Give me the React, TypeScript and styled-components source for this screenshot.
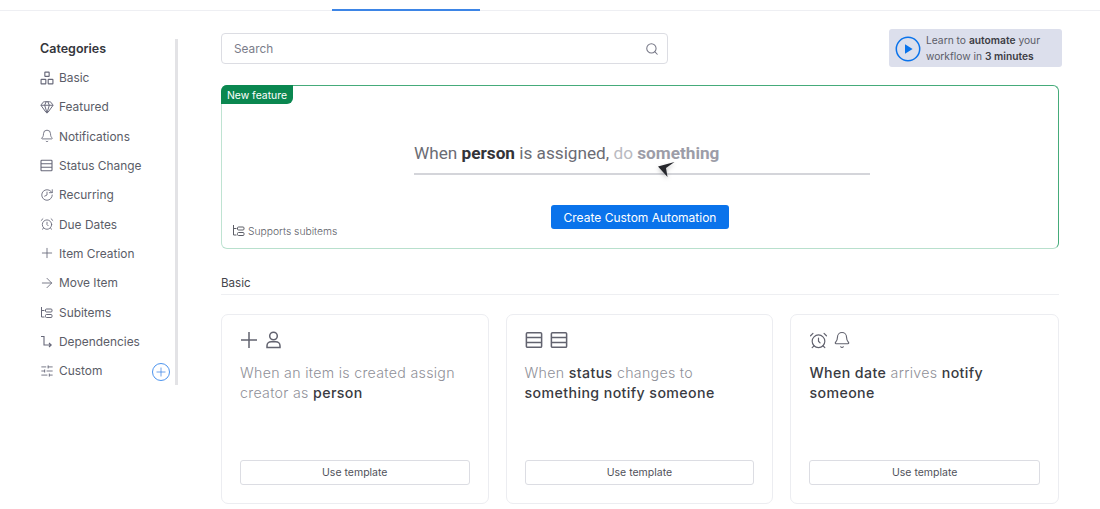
import type { ReactNode } from 'react';
import styled, { createGlobalStyle } from 'styled-components';
import {
  AlarmClock,
  ArrowRight,
  Bell,
  Gem,
  History,
  Plus,
  Search,
  SlidersHorizontal,
} from 'lucide-react';

const GlobalStyle = createGlobalStyle`
  html, body {
    margin: 0;
    padding: 0;
    background: #ffffff;
    font-family: Inter, "Open Sans", sans-serif;
    color: #323338;
  }
`;

const Page = styled.div`
  width: 1100px;
  height: 509px;
  overflow: hidden;
  display: flex;
  flex-direction: column;
`;

const TopBar = styled.div`
  height: 10px;
  flex: none;
  border-bottom: 1px solid #eeeff3;
  padding-left: 332px;
`;

const ActiveTab = styled.div`
  width: 148px;
  height: 2px;
  margin-top: 9px;
  background: #3d85e6;
`;

const Body = styled.div`
  display: flex;
  flex: 1;
  padding-left: 40px;
`;

const Sidebar = styled.aside`
  width: 138px;
  height: 346px;
  margin-top: 28px;
  flex: none;
  border-right: 3px solid #e3e3e6;
  padding-right: 5px;
  box-sizing: border-box;
`;

const SideTitle = styled.h3`
  margin: 0 0 3px;
  height: 20px;
  padding-top: 1px;
  font-size: 12.5px;
  line-height: 18px;
  font-weight: 600;
  color: #35363c;
`;

const SideRow = styled.div`
  height: 29.3px;
  display: flex;
  align-items: center;
  gap: 6px;
  font-size: 11.9px;
  color: #5b5d68;
  white-space: nowrap;
`;

const SideIcon = styled.span`
  width: 13px;
  height: 13px;
  flex: none;
  display: flex;
  align-items: center;
  justify-content: center;
  color: #676879;

  svg {
    flex: none;
  }
`;

const AddButton = styled.span`
  margin: 2px 0 0 auto;
  width: 18px;
  height: 18px;
  border: 1px solid #4d94ee;
  border-radius: 50%;
  box-sizing: border-box;
  display: flex;
  align-items: center;
  justify-content: center;

  svg {
    color: #3d85e6;
  }
`;

const Main = styled.main`
  width: 838px;
  margin-left: 43px;
  flex: none;
  padding-top: 18px;
`;

const TopRow = styled.div`
  display: flex;
  justify-content: space-between;
  align-items: center;
  height: 38px;
`;

const SearchBox = styled.div`
  width: 447px;
  height: 31px;
  box-sizing: border-box;
  border: 1px solid #dcdde3;
  border-radius: 4px;
  padding: 1px 8px 0 12px;
  display: flex;
  align-items: center;
  justify-content: space-between;
  font-size: 11.8px;
  color: #7b7d8a;

  svg {
    color: #767786;
  }
`;

const LearnBox = styled.div`
  width: 173px;
  height: 38px;
  margin-right: -3px;
  box-sizing: border-box;
  border-radius: 3px;
  background: #dcdfec;
  padding: 1px 5px 0 6px;
  display: flex;
  align-items: center;
  gap: 5px;
  font-size: 10.25px;
  line-height: 15.5px;
  color: #5b5d68;

  b {
    font-weight: 600;
    color: #3c3d44;
  }
`;

const FeatureCard = styled.section`
  position: relative;
  height: 164px;
  margin-top: 18px;
  box-sizing: border-box;
  border: 1px solid #45ab7a;
  border-left-color: #bfe3d2;
  border-bottom-color: #b8e0cd;
  border-radius: 6px;
  display: flex;
  flex-direction: column;
  align-items: center;
`;

const FeatureBadge = styled.span`
  position: absolute;
  top: -1px;
  left: -1px;
  height: 19px;
  padding: 0 6px;
  border-radius: 6px 0 6px 0;
  background: #0a8750;
  color: #ffffff;
  font-size: 10.4px;
  line-height: 21px;
`;

const SentenceBlock = styled.div`
  position: relative;
  width: 456px;
  height: 33px;
  margin: 54px 0 0 4px;
  border-bottom: 2px solid #d4d5da;
  font-family: Roboto, sans-serif;
  font-size: 17.2px;
  line-height: 27px;
  color: #6b6c74;

  b {
    font-weight: 700;
    color: #333338;
  }
`;

const Faded = styled.span`
  color: #b9bac1;

  b {
    color: #9c9da8;
  }
`;

const Pointer = styled.svg`
  position: absolute;
  left: 244px;
  top: 20px;
  filter: drop-shadow(0 2px 2px rgba(0, 0, 0, 0.25));
`;

const FeatureFooter = styled.div`
  width: 100%;
  margin-top: 30px;
  display: grid;
  grid-template-columns: 1fr auto 1fr;
`;

const Supports = styled.span`
  align-self: end;
  padding-left: 10px;
  margin-bottom: -8px;
  display: flex;
  align-items: center;
  gap: 3px;
  font-size: 10.3px;
  font-weight: 300;
  color: #5d5e67;
`;

const PrimaryButton = styled.button`
  width: 178px;
  height: 24px;
  padding: 0;
  border: none;
  border-radius: 3px;
  background: #0a73eb;
  color: #ffffff;
  font-family: inherit;
  font-size: 12px;
`;

const SectionTitle = styled.div`
  margin-top: 26px;
  height: 19px;
  border-bottom: 1px solid #eeeff2;
  font-size: 11.6px;
  line-height: 16px;
  color: #44454c;
`;

const CardGrid = styled.div`
  margin-top: 19px;
  display: grid;
  grid-template-columns: 267.5px 267.9px 268.6px;
  gap: 17px;
`;

const Card = styled.article`
  height: 190px;
  box-sizing: border-box;
  border: 1px solid #ecedf1;
  border-radius: 7px;
  padding: 14px 18px 18px;
  display: flex;
  flex-direction: column;
`;

const CardIcons = styled.div<{ $gap: number }>`
  height: 22px;
  display: flex;
  align-items: center;
  gap: ${(props) => props.$gap}px;
  color: #62636f;
`;

const CardText = styled.p`
  margin: 12px 0 0;
  flex: 1;
  font-size: 14.2px;
  line-height: 19.5px;
  font-weight: 300;
  letter-spacing: 0.3px;
  color: #8f9098;

  b {
    font-weight: 500;
    letter-spacing: 0.4px;
    color: #3a3b42;
  }
`;

const TemplateButton = styled.button`
  height: 25px;
  padding: 0;
  border: 1px solid #dcdde3;
  border-radius: 3px;
  background: #ffffff;
  color: #50515a;
  font-family: inherit;
  font-size: 10.5px;
`;

const BasicIcon = () => (
  <svg width="14" height="14" viewBox="0 0 13 13" fill="none" stroke="currentColor" strokeWidth="1.05">
    <rect x="4.5" y="1" width="4" height="4" rx="0.4" />
    <rect x="1" y="7.8" width="4.4" height="4.2" rx="0.4" />
    <rect x="7.6" y="7.8" width="4.4" height="4.2" rx="0.4" />
  </svg>
);

const RowsIcon = ({ size = 13 }: { size?: number }) => (
  <svg width={size} height={size} viewBox="0 0 13 13" fill="none" stroke="currentColor" strokeWidth="1.1">
    <rect x="1" y="1.2" width="11" height="10.6" rx="0.8" />
    <path d="M1 4.7h11M1 8.3h11" />
  </svg>
);

const SubitemsIcon = () => (
  <svg width="13" height="13" viewBox="0 0 13 13" fill="none" stroke="currentColor" strokeWidth="1">
    <path d="M1.5 1v10h3M1.5 4.5h3" />
    <rect x="5.5" y="3" width="6.5" height="3" rx="1" />
    <rect x="5.5" y="8.5" width="6.5" height="3" rx="1" />
  </svg>
);

const DependencyIcon = () => (
  <svg width="13" height="13" viewBox="0 0 13 13" fill="none" stroke="currentColor" strokeWidth="1.1">
    <path d="M1 1.5h3v8.5h7M9 8l2.2 2L9 12" />
  </svg>
);

const PlayIcon = () => (
  <svg width="26" height="26" viewBox="0 0 26 26" style={{ flex: 'none' }}>
    <circle cx="13" cy="13" r="11.7" fill="none" stroke="#0a73eb" strokeWidth="1.5" />
    <path d="M10 8.2v9.6l7.6-4.8z" fill="#0a73eb" />
  </svg>
);

const LargePlus = () => (
  <svg width="18" height="18" viewBox="0 0 18 18" fill="none" stroke="currentColor" strokeWidth="1.5">
    <path d="M1 9h16M9 1v16" />
  </svg>
);

const PersonIcon = () => (
  <svg width="15" height="18" viewBox="0 0 15 18" fill="none" stroke="currentColor" strokeWidth="1.5">
    <circle cx="7.5" cy="5" r="3.8" />
    <path d="M1 16.5v-1.7c0-2.4 2-4 4.2-4h4.6c2.2 0 4.2 1.6 4.2 4v1.7z" />
  </svg>
);

type Category = { label: string; icon: ReactNode };

const categories: Category[] = [
  { label: 'Basic', icon: <BasicIcon /> },
  { label: 'Featured', icon: <Gem size={14} strokeWidth={1.7} /> },
  { label: 'Notifications', icon: <Bell size={14} strokeWidth={1.5} /> },
  { label: 'Status Change', icon: <RowsIcon /> },
  { label: 'Recurring', icon: <History size={14} strokeWidth={1.5} style={{ transform: 'scaleX(-1)' }} /> },
  { label: 'Due Dates', icon: <AlarmClock size={14} strokeWidth={1.5} /> },
  { label: 'Item Creation', icon: <Plus size={16} strokeWidth={1.3} /> },
  { label: 'Move Item', icon: <ArrowRight size={16} strokeWidth={1.3} /> },
  { label: 'Subitems', icon: <SubitemsIcon /> },
  { label: 'Dependencies', icon: <DependencyIcon /> },
  { label: 'Custom', icon: <SlidersHorizontal size={14} strokeWidth={1.5} /> },
];

type Template = { iconGap: number; icons: ReactNode; text: ReactNode };

const templates: Template[] = [
  {
    iconGap: 8,
    icons: (
      <>
        <LargePlus />
        <PersonIcon />
      </>
    ),
    text: (
      <>
        When an item is created assign creator as <b>person</b>
      </>
    ),
  },
  {
    iconGap: 7,
    icons: (
      <>
        <RowsIcon size={18} />
        <RowsIcon size={18} />
      </>
    ),
    text: (
      <>
        When <b>status</b> changes to <b>something notify someone</b>
      </>
    ),
  },
  {
    iconGap: 5,
    icons: (
      <>
        <AlarmClock size={19} strokeWidth={1.5} />
        <Bell size={18} strokeWidth={1.5} />
      </>
    ),
    text: (
      <>
        <b>When date</b> arrives <b>notify someone</b>
      </>
    ),
  },
];

export default function App() {
  return (
    <Page>
      <GlobalStyle />
      <TopBar>
        <ActiveTab />
      </TopBar>
      <Body>
        <Sidebar>
          <SideTitle>Categories</SideTitle>
          {categories.map((category) => (
            <SideRow key={category.label}>
              <SideIcon>{category.icon}</SideIcon>
              {category.label}
              {category.label === 'Custom' && (
                <AddButton>
                  <Plus size={14} strokeWidth={1.3} />
                </AddButton>
              )}
            </SideRow>
          ))}
        </Sidebar>
        <Main>
          <TopRow>
            <SearchBox>
              Search
              <Search size={14} strokeWidth={1.8} />
            </SearchBox>
            <LearnBox>
              <PlayIcon />
              <span>
                Learn to <b>automate</b> your workflow in <b>3 minutes</b>
              </span>
            </LearnBox>
          </TopRow>
          <FeatureCard>
            <FeatureBadge>New feature</FeatureBadge>
            <SentenceBlock>
              When <b>person</b> is assigned, <Faded>do <b>something</b></Faded>
              <Pointer width="18" height="18" viewBox="0 0 18 18">
                <path d="M16.5 2L0 6.5L9.5 17L8 8z" fill="#26272c" />
              </Pointer>
            </SentenceBlock>
            <FeatureFooter>
              <Supports>
                <SubitemsIcon />
                Supports subitems
              </Supports>
              <PrimaryButton>Create Custom Automation</PrimaryButton>
            </FeatureFooter>
          </FeatureCard>
          <SectionTitle>Basic</SectionTitle>
          <CardGrid>
            {templates.map((template, index) => (
              <Card key={index}>
                <CardIcons $gap={template.iconGap}>{template.icons}</CardIcons>
                <CardText>{template.text}</CardText>
                <TemplateButton>Use template</TemplateButton>
              </Card>
            ))}
          </CardGrid>
        </Main>
      </Body>
    </Page>
  );
}
